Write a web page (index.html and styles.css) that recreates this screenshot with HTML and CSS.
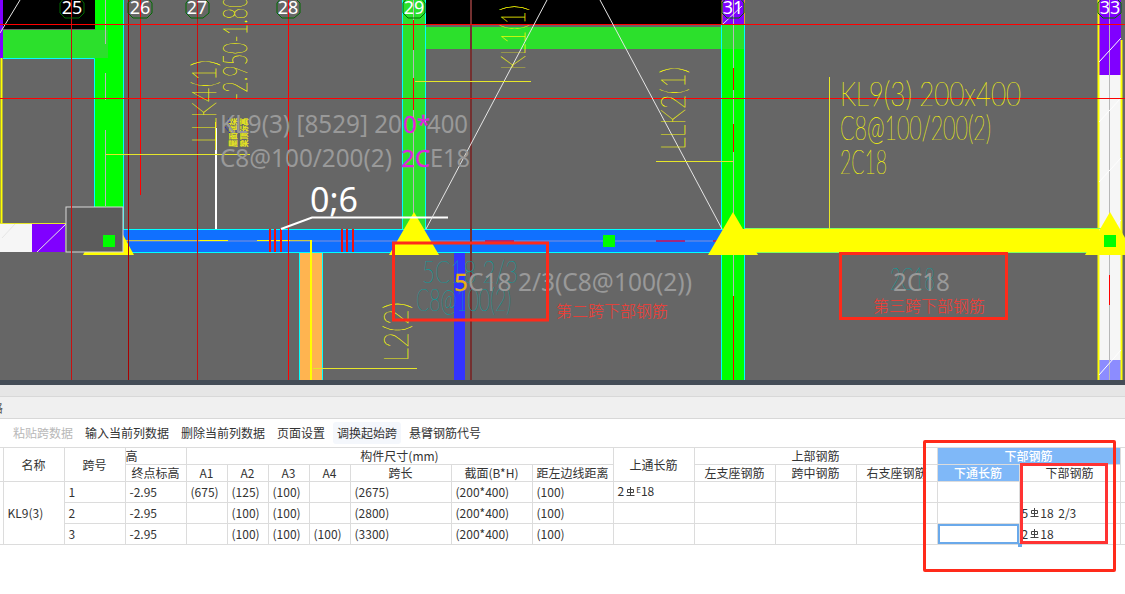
FILE: index.html
```html
<!DOCTYPE html>
<html lang="zh-CN">
<head>
<meta charset="utf-8">
<title>梁平法表格</title>
<link rel="stylesheet" href="styles.css">
</head>
<body>
<svg width="0" height="0" class="defs">
  <symbol id="rebar" viewBox="0 0 9 9">
    <path d="M1.500 2.500h6v3h-6zM4.500 0v8.500M.5 8.500h8" class="rebar-path"/>
  </symbol>
</svg>

<svg class="cad" width="1125" height="380" viewBox="0 0 1125 380">
  <rect class="bg" width="1125" height="380"/>

  <!-- left block -->
  <rect class="black" x="3" y="0" width="92" height="29"/>
  <rect class="purple" x="0" y="0" width="3" height="58"/>
  <rect class="lime" x="95" y="0" width="28" height="207"/>
  <rect class="green" x="3" y="30" width="105" height="28"/>
  <path class="cyan" d="M3 58.500H94.500V207M123.500 0V229"/>
  <path class="yellow2" d="M1.500 58V223"/>
  <path class="yline" d="M0 223.500H66"/>
  <rect class="white" x="0" y="224" width="32" height="28"/>
  <rect class="purple" x="32" y="224" width="33" height="28"/>
  <path class="wline" d="M37 252L66 224M2 238L15 224M0 33L20 0"/>
  <path class="gline" d="M105.500 0V44M105.500 73V100M105.500 130V206"/>

  <!-- stair column & orange -->
  <rect class="orange" x="300" y="252" width="22" height="128"/>
  <path class="cyan" d="M322.500 252V380M299.500 252V380"/>
  <rect class="blue2" x="454" y="252" width="11" height="128"/>

  <!-- column 29 -->
  <rect class="green" x="403" y="0" width="23" height="230"/>
  <path class="cyan" d="M402.500 0V230M425.500 0V230"/>
  <path class="gline" d="M413.500 0V230"/>
  <rect class="black" x="426" y="0" width="296" height="25"/>
  <rect class="green" x="426" y="27" width="296" height="22"/>

  <!-- column 31 -->
  <rect class="lime" x="722" y="0" width="23" height="380"/>
  <rect class="purple" x="722" y="0" width="23" height="24"/>
  <rect class="green" x="722" y="24" width="23" height="25"/>
  <path class="cyan" d="M721.500 24V380M744.500 24V380"/>
  <path class="ochre" d="M722 .5V24M744.500 0V24"/>
  <path class="gline" d="M733.500 0V380"/>
  <path class="wline" d="M723 24L742 6"/>

  <!-- column 33 -->
  <rect class="purple" x="1099" y="0" width="22" height="75"/>
  <rect class="white" x="1099" y="75" width="22" height="285"/>
  <rect class="violet" x="1099" y="360" width="22" height="20"/>
  <path class="yellow2" d="M1098.500 0V380M1121.500 40V380"/>
  <path class="gline" d="M1109.500 0V380"/>
  <path class="wdiag" d="M1099 62L1121 38M1099 122L1121 98M1099 182L1121 158M1099 245L1121 220M1099 375L1121 350"/>

  <!-- beams -->
  <rect class="beam" x="123" y="229" width="602" height="23"/>
  <path class="cyan" d="M123 229.500H725M123 252.500H725"/>
  <rect class="ybeam" x="725" y="229" width="373" height="23"/>
  <path class="lgreen" d="M745 228.500H1110M745 252.500H1110"/>
  <path class="bmid" d="M123 241H725"/>
  <path class="ochre2" d="M125 240.500H200M257 240.500H311"/>
  <path class="yline2" d="M200 240.500H228M257 240.500H290"/>
  <path class="yline2 thick" d="M311 240V380"/>
  <path class="rtick" d="M270 229V252M275 229V252M281 229V252M342 229V252M347 229V252M353 229V252"/>
  <path class="mbar" d="M485 241H514M656 241H685M713 241H722"/>

  <!-- supports -->
  <polygon class="tri" points="108,207 83,255 134,255"/>
  <polygon class="tri" points="414,212 389,255 439,255"/>
  <polygon class="tri" points="733,212 708,255 758,255"/>
  <polygon class="tri" points="1110,212 1085,255 1135,255"/>

  <!-- grey box -->
  <rect class="box" x="66" y="207" width="57" height="45"/>

  <!-- green markers -->
  <rect class="lime" x="103" y="235" width="12" height="12"/>
  <rect class="lime" x="603" y="235" width="12" height="12"/>
  <rect class="lime" x="1104" y="235" width="12" height="12"/>

  <!-- red axes -->
  <path class="axis thin" d="M71.500 0V380M197.500 0V380"/>
  <path class="axis dark" d="M128.500 0V380"/>
  <path class="axis" d="M140.500 0V195M288.500 0V380"/>
  <path class="axis brown" d="M471 0V380"/>
  <path class="axis" d="M0 24.500H1125M0 98.500H1125"/>
  <path class="axis" d="M413.500 20V50M413.500 78V110M733.500 68V90M733.500 124V152M733.500 296V380M1109.500 275V305"/>

  <!-- white leaders -->
  <path class="white2" d="M216 128V229"/>
  <path class="white2" d="M281 229L312 217.500H448"/>
  <path class="wline" d="M426 229L547 0M600 0L722 229"/>
  <text class="big" x="310" y="212">0;6</text>

  <!-- thin yellow leaders -->
  <path class="yline" d="M106 154.500H250M415 81.500H531M656 161.500H733M313 368.500H417M829.500 77V229"/>
  <path class="yline" d="M215.500 122V150"/>

  <!-- grid bubbles -->
  <g class="bubbles">
    <polygon points="60,3 65,-3 79,-3 84,3 84,13 79,18 65,18 60,13"/>
    <polygon points="128,3 133,-3 147,-3 152,3 152,13 147,18 133,18 128,13"/>
    <polygon points="186,3 191,-3 203,-3 209,3 209,13 203,18 191,18 186,13"/>
    <polygon points="277,3 282,-3 294,-3 300,3 300,13 294,18 282,18 277,13"/>
    <polygon points="403,3 408,-3 420,-3 425,3 425,13 420,18 408,18 403,13"/>
    <polygon points="722,3 727,-3 739,-3 744,3 744,13 739,18 727,18 722,13"/>
    <polygon points="1098,3 1103,-3 1115,-3 1121,3 1121,13 1115,18 1103,18 1098,13"/>
  </g>
  <g class="axisnum">
    <text x="72" y="14">25</text>
    <text x="140" y="14">26</text>
    <text x="197" y="14">27</text>
    <text x="288" y="14">28</text>
    <text x="414" y="14">29</text>
    <text x="733" y="14">31</text>
    <text x="1110" y="14">33</text>
  </g>

  <!-- CAD yellow text -->
  <g class="cadtext">
    <text transform="translate(216,143) rotate(-90)" textLength="83" lengthAdjust="spacingAndGlyphs">LLK4(1)</text>
    <text transform="translate(247,100) rotate(-90)" textLength="115" lengthAdjust="spacingAndGlyphs">-2.950-1.800</text>
    <text transform="translate(525,70) rotate(-90)" textLength="65" lengthAdjust="spacingAndGlyphs">KL1(1)</text>
    <text transform="translate(685,150) rotate(-90)" textLength="83" lengthAdjust="spacingAndGlyphs">LLK2(1)</text>
    <text transform="translate(408,362) rotate(-90)" textLength="60" lengthAdjust="spacingAndGlyphs">L2(2)</text>
    <text x="840" y="106" textLength="181" lengthAdjust="spacingAndGlyphs">KL9(3) 200x400</text>
    <text x="840" y="140" textLength="151" lengthAdjust="spacingAndGlyphs">C8@100/200(2)</text>
    <text x="840" y="174" textLength="47" lengthAdjust="spacingAndGlyphs">2C18</text>
  </g>
  <text class="cadsmall" transform="translate(236,147) rotate(-90)" textLength="29" lengthAdjust="spacingAndGlyphs">屋面框架</text>
  <text class="cadsmall" transform="translate(247,147) rotate(-90)" textLength="29" lengthAdjust="spacingAndGlyphs">梁顶标高</text>
  <path class="bluebits" d="M226 122H233M229 118V128M232 131H247M225 127L230 133"/>

  <!-- teal text -->
  <g class="teal">
    <text x="422" y="283" textLength="96" lengthAdjust="spacingAndGlyphs">5C18 2/3</text>
    <text x="416" y="311" textLength="95" lengthAdjust="spacingAndGlyphs">C8@100(2)</text>
    <text x="890" y="290" textLength="45" lengthAdjust="spacingAndGlyphs">2C18</text>
  </g>

  <!-- grey labels -->
  <g class="label">
    <text x="220" y="133" textLength="182" lengthAdjust="spacingAndGlyphs">KL9(3) [8529] 20</text>
    <text x="427" y="133" textLength="41" lengthAdjust="spacingAndGlyphs">400</text>
    <text x="220" y="167" textLength="172" lengthAdjust="spacingAndGlyphs">C8@100/200(2)</text>
    <text x="430" y="167" textLength="40" lengthAdjust="spacingAndGlyphs">E18</text>
    <text x="468" y="291" textLength="224" lengthAdjust="spacingAndGlyphs">C18 2/3(C8@100(2))</text>
    <text x="893" y="291" textLength="57" lengthAdjust="spacingAndGlyphs">2C18</text>
  </g>
  <g class="label-mag">
    <text x="403" y="133">0*</text>
    <text x="401" y="167">2C</text>
  </g>
  <g class="label-amber">
    <text x="454" y="291">5</text>
  </g>

  <!-- annotations -->
  <rect class="redbox" x="393.500" y="243" width="154" height="77"/>
  <rect class="redbox" x="840.500" y="253.500" width="166" height="65"/>
  <text class="note" x="556" y="317">第二跨下部钢筋</text>
  <text class="note" x="873" y="312">第三跨下部钢筋</text>
</svg>

<section class="panel">
  <div class="splitter"></div>
  <div class="band"></div>
  <div class="titlebar"><span class="title">表格</span></div>
  <div class="toolbar">
    <span class="tool disabled">粘贴跨数据</span>
    <span class="tool">输入当前列数据</span>
    <span class="tool">删除当前列数据</span>
    <span class="tool">页面设置</span>
    <span class="tool hover">调换起始跨</span>
    <span class="tool">悬臂钢筋代号</span>
  </div>
  <table class="grid">
    <colgroup>
      <col class="c3"><col class="c61"><col class="c61"><col class="c61">
      <col class="c41"><col class="c41"><col class="c41"><col class="c41">
      <col class="c101"><col class="c81"><col class="c81"><col class="c81">
      <col class="c81"><col class="c81"><col class="c81"><col class="c82">
      <col class="c101"><col class="c5">
    </colgroup>
    <thead>
      <tr class="h1">
        <th rowspan="2"></th>
        <th rowspan="2">名称</th>
        <th rowspan="2">跨号</th>
        <th class="clip">高</th>
        <th colspan="7">构件尺寸(mm)</th>
        <th rowspan="2">上通长筋</th>
        <th colspan="3">上部钢筋</th>
        <th colspan="2" class="sel">下部钢筋</th>
        <th rowspan="2"></th>
      </tr>
      <tr class="h2">
        <th>终点标高</th>
        <th>A1</th><th>A2</th><th>A3</th><th>A4</th>
        <th>跨长</th><th>截面(B*H)</th><th>距左边线距离</th>
        <th>左支座钢筋</th><th>跨中钢筋</th><th>右支座钢筋</th>
        <th class="sel">下通长筋</th><th>下部钢筋</th>
      </tr>
    </thead>
    <tbody>
      <tr>
        <td rowspan="3"></td>
        <td rowspan="3">KL9(3)</td>
        <td>1</td><td>-2.95</td><td>(675)</td><td>(125)</td><td>(100)</td><td></td>
        <td>(2675)</td><td>(200*400)</td><td>(100)</td>
        <td>2<svg class="rb"><use href="#rebar"/></svg><span class="sup">E</span>18</td>
        <td></td><td></td><td></td><td></td><td></td><td></td>
      </tr>
      <tr>
        <td>2</td><td>-2.95</td><td></td><td>(100)</td><td>(100)</td><td></td>
        <td>(2800)</td><td>(200*400)</td><td>(100)</td>
        <td></td><td></td><td></td><td></td><td></td>
        <td class="tight">5<svg class="rb"><use href="#rebar"/></svg>18 2/3</td><td></td>
      </tr>
      <tr>
        <td>3</td><td>-2.95</td><td></td><td>(100)</td><td>(100)</td><td>(100)</td>
        <td>(3300)</td><td>(200*400)</td><td>(100)</td>
        <td></td><td></td><td></td><td></td><td class="active"></td>
        <td class="tight">2<svg class="rb"><use href="#rebar"/></svg>18</td><td></td>
      </tr>
    </tbody>
  </table>
  <div class="mark outer"></div>
  <div class="mark inner"></div>
</section>
</body>
</html>
```

FILE: styles.css
```css
html, body {
  margin: 0;
  padding: 0;
  width: 1125px;
  height: 594px;
  overflow: hidden;
  background: #fff;
  font-family: "Noto Sans CJK SC", "Noto Sans", sans-serif;
  font-size: 12px;
  color: #333;
}
.defs { position: absolute; }
.cad { display: block; }

/* CAD fills */
.bg { fill: #666; }
.black { fill: #000; }
.purple { fill: #8000ff; }
.violet { fill: #8c8cff; }
.lime { fill: #0f0; }
.green { fill: #2ce02c; }
.white { fill: #f6f6f6; }
.orange { fill: #ffb450; }
.blue2 { fill: #3333ff; }
.beam { fill: #1070ff; }
.ybeam { fill: #ff0; }
.tri { fill: #ff0; }
.box { fill: #5c5c5c; stroke: #d8d8d8; stroke-width: 1; }

/* CAD strokes */
path { fill: none; }
.cyan { stroke: #0ff; stroke-width: 1; }
.yellow2 { stroke: #ff0; stroke-width: 2; }
.yline { stroke: #e6e62a; stroke-width: 1; }
.yline2 { stroke: #ff0; stroke-width: 1; }
.yline2.thick { stroke-width: 2; }
.ochre { stroke: #e0a030; stroke-width: 1; }
.ochre2 { stroke: #c8c84a; stroke-width: 1; }
.lgreen { stroke: #80ff60; stroke-width: 1; }
.wline { stroke: #e6e6e6; stroke-width: 1; }
.wdiag { stroke: #fff; stroke-width: 1; }
.white2 { stroke: #fff; stroke-width: 2; }
.gline { stroke: #b8b8b8; stroke-width: 1; }
.bmid { stroke: #5c86e6; stroke-width: 1.500; }
.rtick { stroke: #f01010; stroke-width: 2; }
.mbar { stroke: #a02880; stroke-width: 2; }
.axis { stroke: #f00; stroke-width: 1; }
.axis.thin { stroke: #c81010; }
.axis.dark { stroke: #a80000; }
.axis.brown { stroke: #743030; stroke-width: 2; }
.bubbles polygon { fill: none; stroke: #006a00; stroke-width: 1; }
.bluebits { stroke: #2020c0; stroke-width: 1; stroke-dasharray: 2 1; }
.axisnum text {
  font-family: "Noto Sans", sans-serif;
  font-size: 18px;
  fill: #fff;
  text-anchor: middle;
}
.big {
  font-family: "Noto Sans", sans-serif;
  font-size: 34px;
  fill: #fff;
}
.cadtext text {
  font-family: "Lato", "Roboto", sans-serif;
  font-weight: 100;
  font-size: 33px;
  fill: #ff0;
  stroke: #ff0;
  stroke-width: .2px;
}
.cadsmall {
  font-family: "Noto Sans CJK SC", sans-serif;
  font-size: 8px;
  fill: #e6e620;
  stroke: #e6e620;
  stroke-width: .4px;
}
.teal text {
  font-family: "Lato", "Roboto", sans-serif;
  font-weight: 100;
  font-size: 31px;
  fill: #00a8a8;
  stroke: #00a0a0;
  stroke-width: .15px;
}
.label text {
  font-family: "Noto Sans", sans-serif;
  font-size: 26px;
  fill: #999;
}
.label-mag text, .label-amber text {
  font-family: "Noto Sans", sans-serif;
  font-size: 24px;
  stroke-width: .3px;
}
.label-mag text { fill: #e020e0; stroke: #e020e0; }
.label-amber text { fill: #e8b010; stroke: #e8b010; }
.redbox { fill: none; stroke: #ff2a1a; stroke-width: 3; }
.note {
  font-family: "Noto Sans CJK SC", sans-serif;
  font-weight: 300;
  font-size: 16px;
  fill: #f63c34;
}

/* bottom panel */
.panel { position: relative; height: 214px; }
.splitter { height: 5px; background: #444c56; }
.band { height: 11px; background: #e6e6e6; border-bottom: 1px solid #d8d8d8; }
.titlebar {
  height: 21px;
  line-height: 21px;
  background: #f0f0f0;
  border-bottom: 1px solid #d8d8d8;
  overflow: hidden;
  color: #555;
}
.title { display: block; margin-left: -21px; }
.toolbar {
  display: flex;
  align-items: center;
  gap: 4px;
  height: 28px;
  padding: 0 0 0 9px;
  box-sizing: border-box;
}
.tool {
  padding: 0 4px;
  height: 22px;
  line-height: 22px;
  border-radius: 3px;
  white-space: nowrap;
}
.tool.disabled { color: #b8b8b8; }
.tool.hover { background: #f4f7fc; }

.grid {
  table-layout: fixed;
  width: 1125px;
  border-collapse: collapse;
  font-size: 12px;
}
.c3 { width: 3px; }
.c5 { width: 5px; }
.c41 { width: 41px; }
.c61 { width: 61px; }
.c81 { width: 81px; }
.c82 { width: 82px; }
.c101 { width: 101px; }
.grid th, .grid td {
  border: 1px solid #dcdcdc;
  padding: 0;
  overflow: hidden;
  white-space: nowrap;
  box-sizing: border-box;
}
.grid th {
  font-weight: 400;
  text-align: center;
  line-height: 14px;
}
.grid tr > :first-child { border-left: 0; }
.grid tr > :last-child { border-right: 0; }
.grid .h1 { height: 17px; }
.grid .h2 { height: 17px; }
.grid tbody tr { height: 21px; }
.grid td { padding: 0 0 0 4px; line-height: 14px; }
.grid td.tight { padding-left: 2px; word-spacing: 2px; }
.grid th.clip { text-align: left; }
.grid th.sel { background: #7fb8f8; color: #fff; font-weight: 500; }
.grid td.active {
  position: relative;
  box-shadow: inset 0 0 0 2px #6aa9ea;
  overflow: visible;
}
.grid td.active::after {
  content: "";
  position: absolute;
  right: -3px;
  bottom: -3px;
  width: 4px;
  height: 4px;
  background: #6aa9ea;
}
.rb { width: 9px; height: 9px; margin: 0 1px 3px 2px; vertical-align: middle; }
.rebar-path { stroke: #444; stroke-width: 1; }
.sup { font-size: 8px; position: relative; top: -3px; }

.mark { position: absolute; box-sizing: border-box; pointer-events: none; }
.mark.outer {
  left: 923px;
  top: 60px;
  width: 193px;
  height: 132px;
  border: 3px solid #ff2a1a;
  border-radius: 2px;
}
.mark.inner {
  left: 1020px;
  top: 83px;
  width: 88px;
  height: 81px;
  border: 3px solid #f33;
}
```
